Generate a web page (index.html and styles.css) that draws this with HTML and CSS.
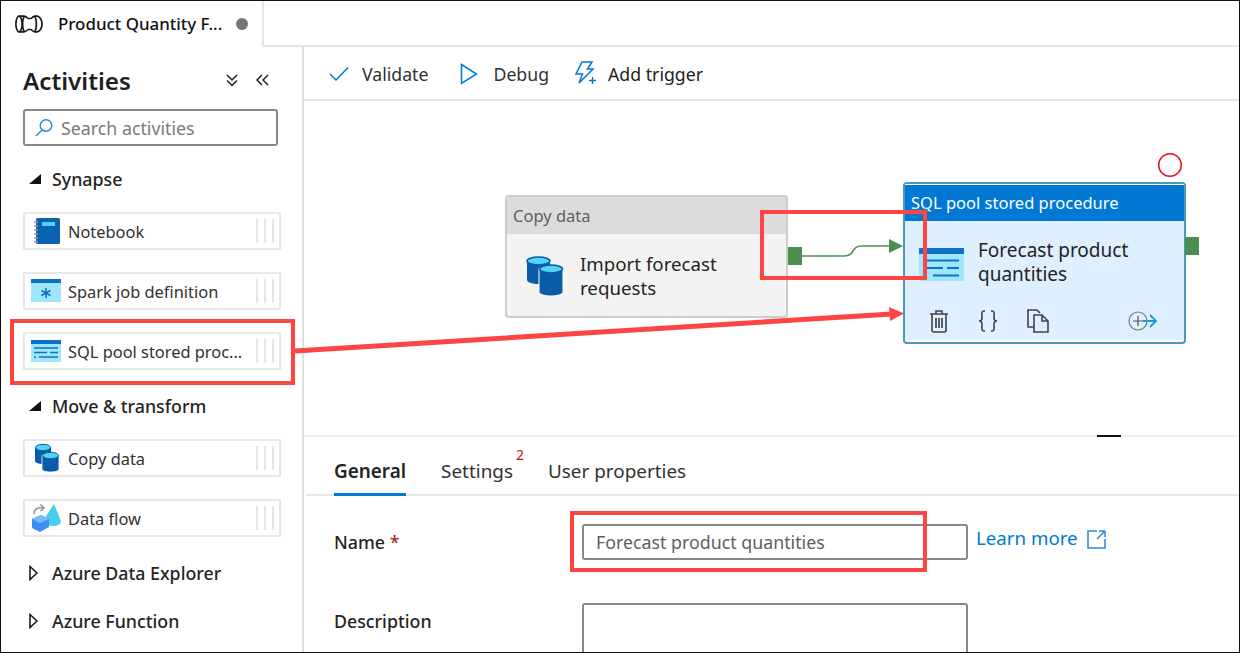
FILE: index.html
```html
<!DOCTYPE html>
<html lang="en">
<head>
  <meta charset="UTF-8">
  <title>Product Quantity Forecast</title>
  <link rel="stylesheet" href="styles.css">
</head>
<body>
<div class="frame">

  <div class="tabbar">
    <div class="tab">
      <svg class="pipe-icon" width="28" height="18" viewBox="0 0 28 18" fill="none" stroke="#1a1a1a" stroke-width="1.700">
        <ellipse cx="4" cy="9" rx="3.100" ry="7.800"/>
        <path d="M4 1.200H9C11.500 1.200 12.500 3.500 13 3.500H16C16.500 3.500 17.500 1.200 20 1.200H23M4 16.800H9C11.500 16.800 12.500 14.500 13 14.500H16C16.500 14.500 17.500 16.800 20 16.800H23"/>
        <path d="M9.500 1.200C7 4 7 14 9.500 16.800"/>
        <path d="M19.500 1.200C22 4 22 14 19.500 16.800"/>
        <path d="M23 1.200C26 3 27 7 27 9C27 11 26 15 23 16.800"/>
      </svg>
      <span class="tab-name">Product Quantity F...</span>
      <span class="dot"></span>
    </div>
    <div class="tab-rest"></div>
  </div>

  <div class="main">
    <aside class="sidebar">
      <div class="side-head">
        <h2>Activities</h2>
        <svg width="14" height="14" viewBox="0 0 14 14" fill="none" stroke="#222" stroke-width="1.5"><path d="M2 2L7 7L12 2M2 7.500L7 12.500L12 7.500"/></svg>
        <svg class="collapse" width="14" height="14" viewBox="0 0 14 14" fill="none" stroke="#222" stroke-width="1.5"><path d="M7 2L2 7L7 12M13 2L8 7L13 12"/></svg>
      </div>
      <div class="search">
        <svg width="20" height="20" viewBox="0 0 20 20" fill="none" stroke="#2b88d8" stroke-width="1.4"><circle cx="12" cy="7.500" r="5.800"/><path d="M8 12L2 18"/></svg>
        <span>Search activities</span>
      </div>

      <div class="cat">
        <svg width="14" height="12" viewBox="0 0 14 12"><path d="M13 1V11H1Z" fill="#111"/></svg>
        <span>Synapse</span>
      </div>
      <div class="items">
        <div class="item">
          <svg width="30" height="28" viewBox="0 0 30 28">
            <rect x="5" y="1" width="24" height="26" rx="1.500" fill="#0a62b0"/>
            <rect x="11" y="5" width="13" height="4" fill="#50d4f5"/>
            <path d="M3 5H7M3 9H7M3 13H7M3 17H7M3 21H7M3 25H7" stroke="#999" stroke-width="1.500"/>
          </svg>
          <span class="item-name">Notebook</span>
          <span class="grip"><i></i><i></i><i></i></span>
        </div>
        <div class="item">
          <svg width="30" height="24" viewBox="0 0 30 24">
            <rect y="0" width="30" height="23" fill="#9fe6fb"/>
            <rect y="0" width="30" height="4" fill="#0a72c8"/>
            <path d="M15 9V19M10.500 11.500L19.500 16.500M19.500 11.500L10.500 16.500" stroke="#0a72c8" stroke-width="1.600"/>
          </svg>
          <span class="item-name">Spark job definition</span>
          <span class="grip"><i></i><i></i><i></i></span>
        </div>
        <div class="item">
          <svg width="30" height="23" viewBox="0 0 30 23">
            <rect y="0" width="30" height="22" fill="#9fe6fb"/>
            <rect y="0" width="30" height="4" fill="#0a72c8"/>
            <path d="M3 8H27M3 12.500H16M19 12.500H27M3 17H5M8 17H27" stroke="#0a72c8" stroke-width="1.500"/>
          </svg>
          <span class="item-name">SQL pool stored proc...</span>
          <span class="grip"><i></i><i></i><i></i></span>
        </div>
      </div>

      <div class="cat">
        <svg width="14" height="12" viewBox="0 0 14 12"><path d="M13 1V11H1Z" fill="#111"/></svg>
        <span>Move &amp; transform</span>
      </div>
      <div class="items">
        <div class="item">
          <svg width="30" height="30" viewBox="0 0 30 30">
            <path d="M4 4V18C4 20 8 21 12 21C16 21 20 20 20 18V4Z" fill="#0a5ca8"/>
            <ellipse cx="12" cy="4.500" rx="7.500" ry="3.200" fill="#50d4f5" stroke="#0a5ca8"/>
            <path d="M11 12V26C11 28 15 29 19.500 29C24 29 28 28 28 26V12Z" fill="#0a5ca8" stroke="#fff" stroke-width="0.800"/>
            <ellipse cx="19.500" cy="12.500" rx="8" ry="3.200" fill="#50d4f5" stroke="#0a5ca8"/>
          </svg>
          <span class="item-name">Copy data</span>
          <span class="grip"><i></i><i></i><i></i></span>
        </div>
        <div class="item">
          <svg width="30" height="30" viewBox="0 0 30 30">
            <path d="M23 1L30 18C30 21 26 23 22 23C20 23 18 22.500 16 21.500L15 13Z" fill="#45cfee"/>
            <path d="M1 16L10 12L18 16V24L9 29L1 25Z" fill="#3d8ef0"/>
            <path d="M1 16L9 20L18 16L10 12Z" fill="#7db8f7"/>
            <path d="M3 11C3 6 7 4 12 5M9.500 1.500L13 5L9.500 8" fill="none" stroke="#999" stroke-width="1.600"/>
          </svg>
          <span class="item-name">Data flow</span>
          <span class="grip"><i></i><i></i><i></i></span>
        </div>
      </div>

      <div class="cat cat-closed">
        <svg width="14" height="16" viewBox="0 0 14 16"><path d="M2 1.500L9 8L2 14.500Z" fill="none" stroke="#111" stroke-width="1.500"/></svg>
        <span>Azure Data Explorer</span>
      </div>
      <div class="cat cat-closed">
        <svg width="14" height="16" viewBox="0 0 14 16"><path d="M2 1.500L9 8L2 14.500Z" fill="none" stroke="#111" stroke-width="1.500"/></svg>
        <span>Azure Function</span>
      </div>
    </aside>

    <section class="content">
      <div class="toolbar">
        <div class="tool tool-validate">
          <svg width="20" height="16" viewBox="0 0 20 16" fill="none" stroke="#0078d4" stroke-width="1.500"><path d="M1 8L7 14L19 1.500"/></svg>
          <span>Validate</span>
        </div>
        <div class="tool tool-debug">
          <svg width="18" height="22" viewBox="0 0 18 22" fill="none" stroke="#0078d4" stroke-width="1.500"><path d="M1.500 1.500L16.500 11L1.500 20.500Z"/></svg>
          <span>Debug</span>
        </div>
        <div class="tool tool-trigger">
          <svg width="22" height="25" viewBox="0 0 22 25" fill="none" stroke="#0078d4" stroke-width="1.500"><path d="M7 1H17L12.500 8H18L4 22L7.500 13H1Z"/><path d="M14 19.500H21M17.500 16V23"/></svg>
          <span>Add trigger</span>
        </div>
      </div>

      <div class="canvas">
        <svg class="links" width="936" height="334" viewBox="0 0 936 334">
          <path d="M498 155H540C552 155 546 145 558 145H590" fill="none" stroke="#4a8f50" stroke-width="1.500"/>
          <path d="M585 138L599 145L585 152Z" fill="#4a8f50"/>
          <circle cx="866" cy="64" r="11.300" fill="none" stroke="#e81123" stroke-width="1.500"/>
        </svg>

        <div class="node node-copy">
          <div class="node-title">Copy data</div>
          <div class="node-body">
            <svg width="38" height="42" viewBox="0 0 38 42">
              <path d="M1 5V25C1 27 6 29 12 29C18 29 24 27 24 25V5Z" fill="#0a5ca8"/>
              <ellipse cx="12.500" cy="6" rx="11.500" ry="4" fill="#50d4f5" stroke="#0a5ca8" stroke-width="1.500"/>
              <path d="M13 13V37C13 39 18 41 25 41C32 41 37 39 37 37V13Z" fill="#0a5ca8" stroke="#fff" stroke-width="1"/>
              <ellipse cx="25" cy="14" rx="11.500" ry="4" fill="#50d4f5" stroke="#0a5ca8" stroke-width="1.500"/>
            </svg>
            <div class="node-name">Import forecast<br>requests</div>
          </div>
          <span class="port"></span>
        </div>

        <div class="node node-sql">
          <div class="node-title">SQL pool stored procedure</div>
          <div class="node-body">
            <svg width="46" height="34" viewBox="0 0 46 34">
              <rect y="0" width="45" height="33" fill="#9fe6fb"/>
              <rect y="0" width="45" height="6" fill="#0a72c8"/>
              <path d="M4 12.500H40M4 20H24M28 20H40M4 27.500H8M14 27.500H40" stroke="#0a72c8" stroke-width="2"/>
            </svg>
            <div class="node-name">Forecast product<br>quantities</div>
          </div>
          <div class="node-actions">
            <svg class="act-del" width="20" height="24" viewBox="0 0 20 24" fill="none" stroke="#444" stroke-width="1.600"><path d="M1 5H19M7 5V2H13V5M3 5V21C3 22 4 23 5 23H15C16 23 17 22 17 21V5"/><path d="M7 9V19M10 9V19M13 9V19" stroke-width="1.700"/></svg>
            <svg class="act-json" width="22" height="24" viewBox="0 0 22 24" fill="none" stroke="#444" stroke-width="1.600"><path d="M8 2H7C4 2 5 5 5 9C5 11 4 12 2 12C4 12 5 13 5 15C5 19 4 22 7 22H8M14 2H15C18 2 17 5 17 9C17 11 18 12 20 12C18 12 17 13 17 15C17 19 18 22 15 22H14"/></svg>
            <svg class="act-copy" width="22" height="24" viewBox="0 0 22 24" fill="none" stroke="#444" stroke-width="1.600"><path d="M7 18H1V1H10L13 4M7 6H15L21 12V23H7ZM15 6V12H21"/></svg>
            <svg class="act-next" width="30" height="20" viewBox="0 0 30 20" fill="none"><circle cx="10" cy="10" r="9" stroke="#777" stroke-width="1.200"/><path d="M5 10H15M10 5V15" stroke="#555" stroke-width="1.200"/><path d="M15 10H28M22 4L28 10L22 16" stroke="#1a9bc9" stroke-width="1.800"/></svg>
          </div>
          <span class="port"></span>
        </div>

        <span class="split-handle"></span>
      </div>

      <div class="props">
        <div class="prop-tabs">
          <span class="prop-tab prop-tab-on">General</span>
          <span class="prop-tab">Settings<sup>2</sup></span>
          <span class="prop-tab">User properties</span>
        </div>
        <div class="row row-name">
          <label>Name <em>*</em></label>
          <div class="input">Forecast product quantities</div>
          <a class="learn">Learn more
            <svg width="20" height="20" viewBox="0 0 20 20" fill="none" stroke="#2b88d8" stroke-width="1.500"><path d="M10 2H1V19H18V10M18 2H12M18 2V8M18 2L10 10"/></svg>
          </a>
        </div>
        <div class="row">
          <label>Description</label>
          <div class="input input-area"></div>
        </div>
      </div>
    </section>
  </div>

  <svg class="marks" width="1240" height="653" viewBox="0 0 1240 653" fill="none" stroke="#ff4444" stroke-width="4">
    <rect x="12" y="321" width="281" height="62"/>
    <rect x="762" y="212" width="163" height="66"/>
    <rect x="572" y="513" width="353" height="57"/>
    <path d="M295 351L892 314" stroke-width="5"/>
    <path d="M889 307L904 313.500L890 321Z" fill="#ff4444" stroke="none"/>
  </svg>
</div>
</body>
</html>
```

FILE: styles.css
```css
* {
  box-sizing: border-box;
}
body {
  margin: 0;
  font-family: 'Noto Sans', sans-serif;
  color: #252423;
  background: white;
}
.frame {
  position: relative;
  width: 1240px;
  height: 653px;
  overflow: hidden;
  background: white;
}
.frame::after {
  content: "";
  position: absolute;
  inset: 0;
  border: 1px solid #111;
  pointer-events: none;
}
.marks {
  position: absolute;
  left: 0;
  top: 0;
}

/* top tab */
.tabbar {
  display: flex;
  height: 47px;
}
.tab {
  width: 264px;
  display: flex;
  align-items: center;
  padding-left: 15px;
  border-right: 2px solid #e6e6e6;
}
.tab-name {
  margin-left: 15px;
  font-size: 16.900px;
  font-weight: 500;
  color: #111;
}
.dot {
  width: 12px;
  height: 12px;
  margin-left: 14px;
  border-radius: 50%;
  background: #797775;
}
.tab-rest {
  flex: 1;
  border-bottom: 2px solid #e6e6e6;
}

.main {
  display: flex;
  height: 606px;
}

/* activities */
.sidebar {
  width: 304px;
  flex-shrink: 0;
  padding: 19px 0 0 23px;
  border-right: 2px solid #e0e0e0;
}
.side-head {
  display: flex;
  align-items: center;
  height: 32px;
  margin-bottom: 11px;
}
.side-head h2 {
  margin: 0 0 4px;
  flex: 1;
  font-size: 24.200px;
  font-weight: 600;
  color: #201f1e;
}
.side-head svg {
  margin-right: 16px;
  margin-top: -4px;
}
.side-head .collapse {
  margin-right: 33px;
}
.search {
  display: flex;
  align-items: center;
  width: 255px;
  height: 37px;
  padding-left: 9px;
  margin-bottom: 18px;
  border: 2px solid #8a8886;
  border-radius: 3px;
  font-size: 17.800px;
  color: #7a7a7a;
}
.search span {
  margin: 1px 0 0 7px;
}
.cat {
  display: flex;
  align-items: center;
  height: 30px;
  margin-bottom: 18px;
  padding-left: 5px;
  font-size: 17.800px;
  font-weight: 500;
  color: #252423;
}
.cat span {
  margin-left: 10px;
}
.items {
  display: flex;
  flex-direction: column;
  gap: 22px;
  width: 258px;
  margin-bottom: 21px;
}
.item {
  display: flex;
  align-items: center;
  height: 38px;
  padding-left: 6px;
  border: 2px solid #e8e8e8;
  font-size: 16.400px;
  color: #323130;
}
.item svg {
  flex-shrink: 0;
}
.item-name {
  flex: 1;
  min-width: 0;
  margin-left: 7px;
  white-space: nowrap;
}
.grip {
  display: flex;
  gap: 6px;
  margin: 0 5px 0 12px;
}
.grip i {
  width: 2px;
  height: 24px;
  background: #e6e6e6;
}

/* toolbar */
.content {
  flex: 1;
  min-width: 0;
}
.toolbar {
  display: flex;
  align-items: center;
  height: 54px;
  padding-top: 1px;
  border-bottom: 2px solid #e6e6e6;
  font-size: 17.700px;
  color: #323130;
}
.tool {
  display: flex;
  align-items: center;
  gap: 13px;
}
.tool-validate {
  margin-left: 25px;
}
.tool-debug {
  margin-left: 32px;
  gap: 15px;
}
.tool-trigger {
  margin-left: 26px;
  gap: 11px;
  color: #201f1e;
}

/* pipeline canvas */
.canvas {
  position: relative;
  height: 336px;
  border-bottom: 2px solid #eeeeee;
}
.links {
  position: absolute;
  left: 0;
  top: 0;
}
.node {
  position: absolute;
  width: 283px;
  border-radius: 4px;
  border: 2px solid #cccccc;
}
.node-copy {
  left: 201px;
  top: 94px;
  height: 123px;
  background: #f3f3f3;
}
.node-sql {
  left: 599px;
  top: 81px;
  height: 162px;
  border-color: #4a9ab8;
  background: #deefff;
  box-shadow: inset 0 -2px 0 white;
}
.node-title {
  height: 37px;
  padding: 0 6px;
  line-height: 38px;
  font-size: 16.500px;
  background: #dcdcdc;
  color: #605e5c;
}
.node-sql .node-title {
  border-top: 1px solid white;
  line-height: 36px;
  background: #0078d4;
  color: white;
}
.node-body {
  display: flex;
  align-items: center;
  padding: 18px 0 0 19px;
}
.node-sql .node-body {
  padding: 17px 0 0 14px;
}
.node-sql .node-body svg {
  margin-top: 5px;
}
.node-name {
  margin-left: 16px;
  font-size: 18.700px;
  line-height: 24px;
  color: #252423;
}
.node-sql .node-name {
  margin-left: 13px;
  font-size: 19px;
}
.node-actions {
  display: flex;
  align-items: center;
  padding: 23px 0 0 24px;
}
.act-json {
  margin-left: 28px;
}
.act-copy {
  margin-left: 28px;
}
.act-next {
  margin-left: 79px;
}
.port {
  position: absolute;
  width: 14px;
  height: 18px;
  background: #4a8f50;
}
.node-copy .port {
  left: 281px;
  top: 50px;
}
.node-sql .port {
  left: 280px;
  top: 53px;
}
.split-handle {
  position: absolute;
  left: 793px;
  bottom: -2px;
  width: 24px;
  height: 2px;
  background: #111;
}

/* properties */
.props {
  padding-left: 30px;
}
.prop-tabs {
  display: flex;
  height: 59px;
  margin-left: -28px;
  padding-left: 28px;
  border-bottom: 2px solid #e6e6e6;
  font-size: 18.900px;
  color: #323130;
}
.prop-tab {
  height: 59px;
  line-height: 68px;
  margin-right: 35px;
  position: relative;
}
.prop-tab sup {
  position: absolute;
  right: -11px;
  top: 11px;
  font-size: 14px;
  line-height: 14px;
  color: #c50f1f;
}
.prop-tab-on {
  font-weight: 600;
  border-bottom: 3px solid #0078d4;
  color: #252423;
}
.row {
  display: flex;
}
.row-name {
  padding-top: 28px;
  height: 107px;
}
.row label {
  width: 248px;
  font-size: 17.800px;
  font-weight: 500;
  line-height: 36px;
}
.row label em {
  font-style: normal;
  color: #a4262c;
}
.input {
  width: 386px;
  height: 36px;
  padding-left: 12px;
  border: 2px solid #8a8886;
  border-radius: 3px;
  font-size: 17.800px;
  line-height: 33px;
  color: #605e5c;
}
.input-area {
  height: 80px;
}
.learn {
  display: flex;
  gap: 9px;
  margin-left: 8px;
  font-size: 18.700px;
  line-height: 28px;
  color: #0078d4;
}
.learn svg {
  margin-top: 5px;
}
```
